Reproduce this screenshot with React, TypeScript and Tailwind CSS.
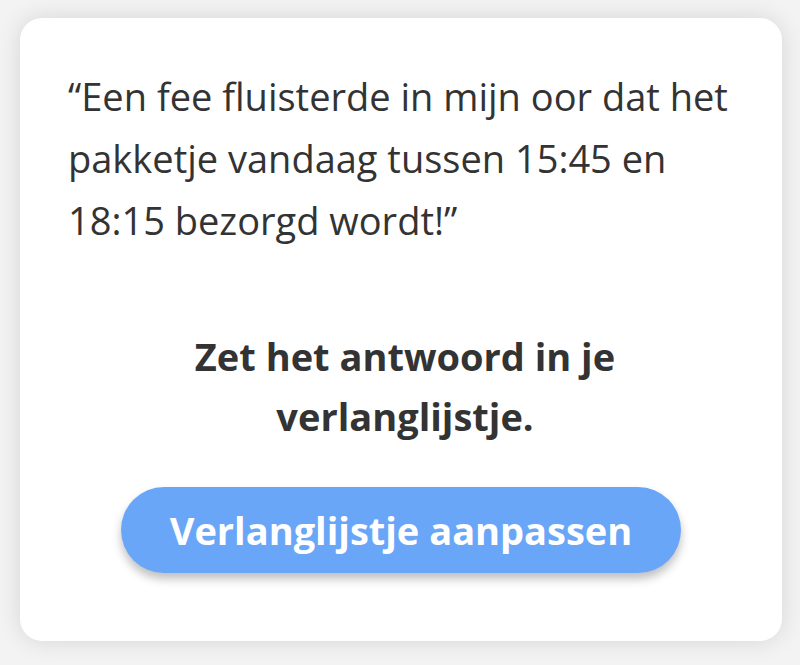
export default function App() {
  return (
    <div
      className="w-[800px] h-[665px] bg-[#f3f3f3] pt-[18px] px-[20px]"
      style={{ fontFamily: '"Open Sans", sans-serif' }}
    >
      <div className="w-[762px] h-[623px] bg-white rounded-[22px] shadow-[0_0_24px_rgba(0,0,0,0.12)] pt-[47px] pl-[48px] pr-[40px] flex flex-col">
        <p className="text-[38px] leading-[62px] text-[#333333]">
          “Een fee fluisterde in mijn oor dat het pakketje vandaag tussen 15:45 en 18:15 bezorgd wordt!”
        </p>
        <p className="mt-[75px] text-center font-bold text-[38px] leading-[60px] text-[#333333] px-[80px]">
          Zet het antwoord in je verlanglijstje.
        </p>
        <div className="mt-[41px] flex justify-center pr-[8px]">
          <button className="w-[560px] h-[86px] rounded-full bg-[#6aa6f8] text-white font-bold text-[38px] shadow-[0_6px_10px_rgba(0,0,0,0.25)]">
            Verlanglijstje aanpassen
          </button>
        </div>
      </div>
    </div>
  )
}
